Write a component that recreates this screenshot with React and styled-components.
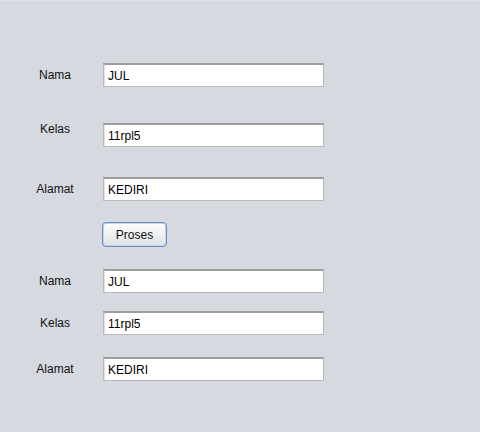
import React from "react";
import styled, { createGlobalStyle } from "styled-components";

const Global = createGlobalStyle`
  html, body { margin: 0; padding: 0; }
  body { background: #d6d9e0; }
`;

const Frame = styled.div`
  width: 480px;
  height: 432px;
  box-sizing: border-box;
  background: #d6d9e0;
  border-top: 1px solid #dfe2e8;
  padding-top: 62px;
  display: flex;
  flex-direction: column;
  font-family: "Liberation Sans", Arial, sans-serif;
  font-size: 12px;
  color: #111;
`;

const Row = styled.div`
  display: grid;
  grid-template-columns: 103px 221px;
  align-items: center;
  margin-top: ${(p) => p.$gap || 0}px;
  height: ${(p) => p.$h || 24}px;
`;

const Label = styled.span`
  justify-self: center;
  padding-left: 7px;
  position: relative;
  top: ${(p) => p.$shift || 0}px;
`;

const Field = styled.input`
  box-sizing: border-box;
  width: 221px;
  height: 24px;
  margin: 0;
  padding: 1px 4px 0;
  background: #fff;
  border: 1px solid #b9b9b9;
  border-top: 2px solid #9e9e9e;
  box-shadow: inset 1px 0 0 #e2e2e2;
  font-family: "Liberation Sans", Arial, sans-serif;
  font-size: 12px;
  color: #000;
  outline: none;
`;

const Button = styled.button`
  grid-column: 2;
  justify-self: start;
  margin-left: -1px;
  box-sizing: border-box;
  width: 65px;
  height: 25px;
  padding: 0;
  border: 1px solid #6f8db8;
  border-radius: 4px;
  background: linear-gradient(#fdfdfd 0%, #f1f2f4 45%, #dcdfe4 100%);
  box-shadow: inset 0 0 0 1px #c3d4ea;
  font-family: "Liberation Sans", Arial, sans-serif;
  font-size: 12px;
  color: #111;
`;

const FieldRow = ({ label, value, gap, shift }) => (
  <Row $gap={gap}>
    <Label $shift={shift}>{label}</Label>
    <Field defaultValue={value} readOnly />
  </Row>
);

export default function App() {
  return (
    <>
      <Global />
      <Frame>
        <FieldRow label="Nama" value="JUL" gap={0} />
        <FieldRow label="Kelas" value="11rpl5" gap={36} shift={-6} />
        <FieldRow label="Alamat" value="KEDIRI" gap={30} />
        <Row $gap={21} $h={25}>
          <Button>Proses</Button>
        </Row>
        <FieldRow label="Nama" value="JUL" gap={22} />
        <FieldRow label="Kelas" value="11rpl5" gap={18} />
        <FieldRow label="Alamat" value="KEDIRI" gap={22} />
      </Frame>
    </>
  );
}
